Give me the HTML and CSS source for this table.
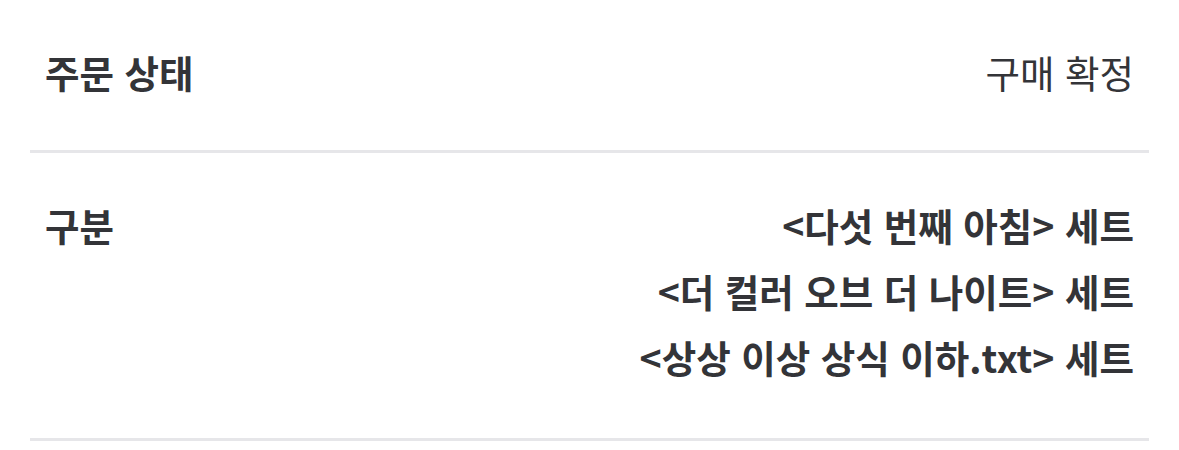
FILE: index.html
```html
<!DOCTYPE html>
<html lang="ko">
<head>
    <meta charset="UTF-8">
    <meta name="viewport" content="width=device-width, initial-scale=1.0">
    <title>주문 정보</title>
    <link rel="stylesheet" href="styles.css">
</head>
<body>
    <div class="order-info">
        <div class="info-row">
            <div class="info-label">주문 상태</div>
            <div class="info-value">구매 확정</div>
        </div>
        <div class="info-row">
            <div class="info-label">구분</div>
            <ul class="info-list">
                <li>&lt;다섯 번째 아침&gt; 세트</li>
                <li>&lt;더 컬러 오브 더 나이트&gt; 세트</li>
                <li>&lt;상상 이상 상식 이하.txt&gt; 세트</li>
            </ul>
        </div>
    </div>
</body>
</html>
```

FILE: styles.css
```css
body {
    margin: 0;
    background: #fff;
    font-family: "Noto Sans CJK KR", "Noto Sans", sans-serif;
    color: #333438;
}
.order-info {
    padding: 0 30px;
}
.info-row {
    display: flex;
    justify-content: space-between;
    align-items: flex-start;
    padding: 39px 15px 45px;
    border-bottom: 3px solid #e6e6e9;
    font-size: 37.5px;
    line-height: 66px;
}
.info-row + .info-row {
    padding-bottom: 48px;
}
.info-label {
    font-weight: 700;
}
.info-value {
    font-weight: 400;
}
.info-list {
    list-style: none;
    margin: 0;
    padding: 0;
    text-align: right;
    font-weight: 700;
}
```
